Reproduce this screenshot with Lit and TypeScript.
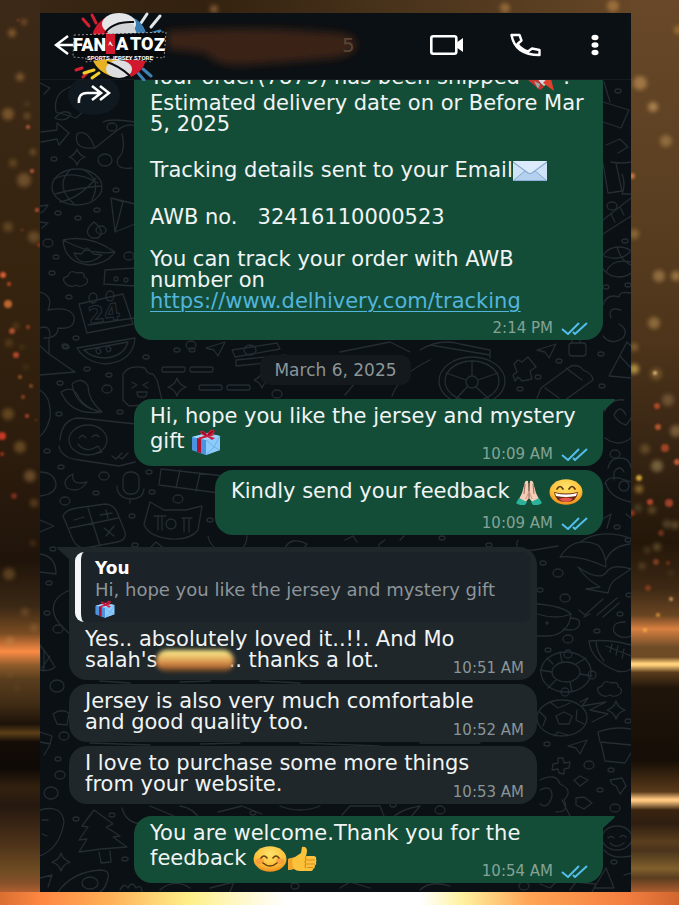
import { LitElement, html, svg, css } from "lit";
import { customElement, property } from "lit/decorators.js";

/* ---------- emoji drawings ---------- */

const gift = svg`
  <polygon points="1,8 16,4 29,7 29,21 15,26 1,21" fill="#5aa9ee"/>
  <polygon points="1,8 15,11 15,26 1,21" fill="#4b93e0"/>
  <polygon points="15,11 29,7 29,21 15,26" fill="#8ccbfa"/>
  <polygon points="1,8 16,4 29,7 15,11" fill="#a7d8fb"/>
  <path d="M15 11l8 7 6-11M15 26l8-8 6 3" fill="none" stroke="#6db1ea" stroke-width="1"/>
  <polygon points="6,9 10,10 10,24 6,23" fill="#b3122d"/>
  <path d="M7 9L20 5l4 1-14 4z" fill="#c4183a"/>
  <path d="M14 7C8 5 8 1 12 2c3 1 4 3 4 4 1-4 4-6 7-5 2 1 0 5-5 6l6 2-3 2-6-4-6 3-2-1z" fill="#d01c3f"/>
  <path d="M11 3l4 3M22 2l-5 4" stroke="#7d0c20" stroke-width="1.2"/>`;

const faceShades = svg`
  <radialGradient id="face" cx="50%" cy="30%" r="70%">
    <stop offset="0" stop-color="#ffe36b"/><stop offset=".65" stop-color="#fcc13a"/><stop offset="1" stop-color="#ee8d1c"/>
  </radialGradient>`;

const emoji: Record<string, { w: number; h: number; label: string; art: unknown }> = {
  gift: { w: 30, h: 26, label: "🎁", art: gift },
  envelope: {
    w: 34, h: 20, label: "✉️",
    art: svg`
      <rect width="34" height="20" rx="1" fill="#cfe3f8"/>
      <path d="M0 20L13 9h8l13 11z" fill="#b4d0ef"/>
      <path d="M1 19L13 9M33 19L21 9" stroke="#86abd2" stroke-width="1"/>
      <path d="M0 0h34L19 12q-2 1-4 0z" fill="#dcebfb"/>
      <path d="M0 1l15 11q2 1 4 0L34 1" fill="none" stroke="#86abd2" stroke-width="1.2"/>
      <path d="M0 19.5h34" stroke="#8db0d6"/>`,
  },
  rocket: {
    w: 30, h: 26, label: "🚀",
    art: svg`
      <path d="M7 12Q15 2 29 1q-1 13-12 20z" fill="#d8dde2"/>
      <path d="M1 15l8-4 5 8 3 3-4 3z" fill="#c9352c"/>
      <path d="M16 18l7-8 4 16z" fill="#e0412f"/>
      <path d="M7 16l6 3-2 5z" fill="#9ea6ac"/>
      <circle cx="20" cy="8" r="3" fill="#4b93c8"/>`,
  },
  pray: {
    w: 26, h: 25, label: "🙏🏻",
    art: svg`
      <path d="M12 1q-2-1-3 1L6 13l-3 6 6 4 4-5zM14 1q2-1 3 1l3 11 3 6-6 4-4-5z" fill="#f3cdb8"/>
      <path d="M13 3v15M9 4L8 14M17 4l1 10" stroke="#a8735f" stroke-width="1.1" fill="none"/>
      <path d="M13 11l-3 8M13 11l3 8" stroke="#d09b85" fill="none"/>
      <path d="M3 18l8 4-2 3q-5 1-9-2zM23 18l-8 4 2 3q5 1 9-2z" fill="#29b39b"/>`,
  },
  grin: {
    w: 34, h: 26, label: "😄",
    art: svg`${faceShades}
      <ellipse cx="17" cy="13" rx="16.5" ry="12.7" fill="url(#face)"/>
      <path d="M8 10q3-5 6 0M20 10q3-5 6 0" fill="none" stroke="#5c3710" stroke-width="1.7" stroke-linecap="round"/>
      <path d="M5 13q12 3 24 0-1 10-12 10T5 13z" fill="#6b2a12"/>
      <path d="M6 14q11 3 22 0l-1 3q-10 2-20 0z" fill="#fff"/>
      <path d="M10 20q7-3 14 0-3 3-7 3t-7-3z" fill="#e8554e"/>`,
  },
  smile: {
    w: 34, h: 26, label: "😊",
    art: svg`${faceShades}
      <ellipse cx="17" cy="13" rx="16.5" ry="12.7" fill="url(#face)"/>
      <ellipse cx="7" cy="15" rx="4" ry="3" fill="#f58a3c" opacity=".6"/>
      <ellipse cx="27" cy="15" rx="4" ry="3" fill="#f58a3c" opacity=".6"/>
      <path d="M8 12q3-4 6 0M20 12q3-4 6 0M10 17q7 6 14 0" fill="none" stroke="#6b3f10" stroke-width="1.6" stroke-linecap="round"/>`,
  },
  thumb: {
    w: 30, h: 26, label: "👍",
    art: svg`
      <path d="M1 13l7-2 6-4 1-6q4-1 5 3 0 3-1 6h8q3 1 2 3 1 2 0 3 1 2-1 3.500 0 3-2 3.500 0 2-3 2H13q-4 0-6-2l-6 1z" fill="#fcc23c"/>
      <path d="M20 14h8M20 18h8M20 21.500h6M19 10q-1 3 0 4-2 2 0 4-2 2 0 4" fill="none" stroke="#d98a1a" stroke-width="1.1"/>
      <path d="M1 24V13l5-1q-2 5 1 11z" fill="#f0a52a"/>`,
  },
};

const pic = (name: string, scale = 1) => {
  const e = emoji[name];
  return html`<svg class="emoji" role="img" aria-label=${e.label}
    width=${Math.round(e.w * scale)} height=${Math.round(e.h * scale)}
    viewBox="0 0 ${e.w} ${e.h}">${e.art}</svg>`;
};

/* ---------- wallpaper ---------- */

const star = (x: number, y: number, r = 9) => svg`
  <path d="M${x} ${y - r}q2 ${r - 2} ${r} ${r}q-${r - 2} 2-${r} ${r}q-2-${r - 2}-${r}-${r}q${r - 2}-2 ${r}-${r}z"/>`;
const plane = (x: number, y: number) => svg`<path d="M${x} ${y}l19-6-7 14-4-6z"/>`;
const cloud = (x: number, y: number) => svg`
  <path d="M${x} ${y}q-6-6 2-8 2-7 9-3 8-2 7 4 6 2 2 7-6 4-10 1-6 3-10-1z"/>`;

const dots: [number, number, number][] = [
  [112, 127, 5], [54, 159, 3], [105, 160, 7], [147, 174, 3], [116, 190, 3], [97, 210, 3], [58, 213, 3], [78, 218, 3],
  [101, 230, 5], [48, 243, 5], [56, 257, 3], [129, 256, 5], [52, 273, 3], [69, 297, 3], [76, 338, 3], [66, 347, 3],
  [87, 369, 3], [109, 375, 3], [60, 383, 3], [107, 389, 5], [59, 414, 3], [120, 412, 3], [47, 451, 3], [61, 467, 3],
  [104, 476, 5], [149, 472, 3], [96, 493, 3], [65, 501, 5], [152, 492, 3], [178, 499, 5], [132, 516, 3], [210, 520, 3],
  [53, 549, 3], [135, 545, 3], [49, 583, 3], [47, 613, 3], [58, 629, 5], [57, 686, 7], [64, 736, 5], [58, 759, 3],
  [60, 775, 5], [51, 793, 7], [76, 819, 3], [112, 815, 3], [125, 859, 3], [152, 876, 4], [191, 345, 5], [146, 357, 3],
  [177, 350, 3], [192, 350, 3], [65, 346, 3], [277, 394, 5], [559, 361, 3], [538, 377, 3], [601, 354, 3], [520, 389, 3],
  [602, 386, 3], [612, 206, 5], [625, 241, 3], [606, 287, 3], [628, 285, 3], [618, 91, 3], [615, 454, 5], [617, 527, 3],
  [628, 540, 3], [543, 563, 3], [558, 573, 5], [540, 590, 3], [565, 598, 5], [629, 595, 3], [620, 614, 3], [597, 631, 3],
  [568, 639, 5], [548, 650, 3], [547, 744, 3], [589, 765, 5], [611, 770, 3], [600, 790, 3], [615, 808, 5], [614, 862, 3],
  [440, 810, 5], [393, 805, 3], [524, 886, 5], [489, 545, 3], [442, 538, 3], [628, 721, 3], [253, 813, 3], [295, 886, 4],
];

const wallpaper = svg`
  <g fill="none" stroke="#242d32" stroke-width="1.300" stroke-linejoin="round" stroke-linecap="round">
    ${dots.map(([x, y, r]) => svg`<ellipse cx=${x} cy=${y} rx=${r} ry=${Math.max(2, r - 1)}/>`)}
    <path d="M56 112q-3-18 12-24 14-10 30-6l10 8-32 28zM55 118q8-10 16-4-4 8-14 5z"/>
    <path d="M40 83l10 5-6 6M41 132l16-2v-7l12 10-10 12-2-6-16 3"/>
    <path d="M77 134q-4 16 18 14l20-16q12-10 20-6M77 134q10-6 18 14M103 122q8-4 32 0"/>
    <path d="M118 158q8-6 4-24M118 158q-4 12 14 10"/>
    ${star(77, 157, 8)}
    <ellipse cx="77" cy="187" rx="25" ry="18"/>
    <path d="M54 179q20-10 44 4M55 194q22-6 46-8M70 170q-16 16 4 34M84 170q18 10 8 30M60 202q20-4 36-24"/>
    <path d="M111 198l24 6v20l-20 8zM111 198l12 4-8 30"/>
    <path d="M40 206l8-1-4 6-4 2M40 222l8 1-6 5"/>
    <path d="M63 240q26-6 52 12-8 12-26 13-24-2-26-25zM63 240q30 16 52 12M92 238q-10-6 2-16 12 10 4 16zM74 253q4 10 12 9 8 0 16-7l-8-1-7-6-6 6z"/>
    ${cloud(66, 284)}
    <path d="M105 270l30-2v18l-31-2z"/><circle cx="116" cy="279" r="2"/><circle cx="126" cy="280" r="2"/>
    <path d="M79 304l8 29 46-9-10-30zM88 325l46-7"/><ellipse cx="93" cy="298" rx="4" ry="5"/><ellipse cx="110" cy="296" rx="4" ry="5"/>
    <path d="M40 292q14 4 8 18 22-4 26 6 2 14-16 12 0 10-14 10M40 328q10-4 10 8M40 346l9 8 26 18-35 3M49 338v16"/>
    <path d="M77 348l58-10q-2 24-30 26-20-2-28-16zM84 350l44-8q-4 14-22 16-14 0-22-8z"/>
    <path d="M98 354q-4-4 0-6 6 4 0 6zM108 352q-4-4 0-6 6 4 0 6z"/>
    <path d="M61 392q12-8 18 6 6 10 22 14-30 4-40-20zM72 384q10-8 16 2 0 14 14 26-26-4-30-28z"/>
    <path d="M123 400v-26q6-10 22-6 2 6 8 6l4 6 6 24-34 2zM132 382l5 3-5 3M148 382l-5 3 5 3M137 392h10q0 6-5 5-5 1-5-5"/>
    <rect x="162" y="367" width="23" height="5" rx="2"/><rect x="190" y="367" width="23" height="5" rx="2"/>
    <rect x="199" y="385" width="23" height="5" rx="2"/><rect x="227" y="385" width="23" height="5" rx="2"/>
    <path d="M232 350l45-7 3 6-45 8zM236 360l50-5v6l-50 5z"/><ellipse cx="250" cy="350" rx="6" ry="5"/>
    ${plane(206, 348)} ${star(177, 387)} ${star(262, 380, 8)}
    <path d="M340 352l50-10 20 10M345 395l10-12q10-8 30 0"/>
    <path d="M60 440q2-22 20-22l56 6M59 446q2 12 20 14l40 6 16-4"/>
    <ellipse cx="88" cy="440" rx="19" ry="15"/><path d="M79 438q4-5 7 0M92 437q4-4 7 0M78 444q8 10 20 2l4 6-5 1M112 456l4 3 6-6M119 457l3 2 6-6"/>
    <path d="M40 390q12 8 10 28-4 14-10 18M40 472q14 0 16 12 0 10-16 12"/>
    <path d="M73 474q-12 6-6 14 12 6 20-6-16 4-14-8z"/>
    <rect x="123" y="472" width="16" height="22" rx="7"/><path d="M117 486q0 12 14 13 12 0 13-10M130 499v4"/>
    <path d="M161 469l90 10M159 485l60 8M161 469l-2 16M180 470l-4 18M200 473l-4 18"/>
    <path d="M63 516q2-6 14-8l28-4q8 0 12 8l8 20q2 8-8 10l-32 6q-8 0-12-8zM70 528l48-10M88 508l12 38M74 520l10-3M100 515l12-2M106 510l2 8M104 528l10 8M114 526l-8 10"/>
    <path d="M144 524l6-22 14 8h22l16-4-4 24q-8 10-26 9-24-2-28-15zM154 516h12M158 516v14M162 516v14M182 518h10M184 518v14M189 518v14"/><circle cx="171" cy="524" r="5"/>
    <path d="M208 536q2 12 18 18M247 536q0 8-6 14M285 548q6-12 22-4l-10 12M150 548l6-6 10 8"/>
    <path d="M40 554q16 2 16 20l-16-2M40 520l14 6-14 6M70 590q-20 8-16 24 2 8 16 20"/>
    <path d="M40 645q8 10 15 22-6 5-15 3zM44 650v20M50 656l-8 12M53 714q8-6 16-1l-2 12-10-1zM40 732l12 4-2 8-10-2M50 745l-6 10"/>
    <path d="M40 810q22-6 24 12-4 26-24 34M42 820h6M42 834l5 2"/>
    <path d="M94 810l-12 16 6 1-9 13 8-1-8 13 22-3 26-2-14-10 7-1-14-9 7-3zM99 852l2 11 10-1-1-11"/>
    ${star(61, 862, 9)}
    <path d="M58 892q14-20 42-22 10 0 8 8-2 10-8 14"/><ellipse cx="90" cy="883" rx="8" ry="6"/>
    <path d="M40 878l12-3-4 12M120 890q4-8 8-2 4-8 8 0 6-4 6 4M160 890q14-12 30-2M210 888l24-6-4 10"/>
    <path d="M122 808q4 16 22 16M150 806l24 10-10 6M180 806q14 2 20 14M218 812l24-6 20 8M280 806q20 8 40 0M342 815l8-9h30l4 10M420 806l-10 12-20 4q6-12 30-16"/>
    <path d="M430 360q-30 14-38 36M420 350q20-12 40-6l30 6v8M430 345l60 10"/>
    <ellipse cx="472" cy="381" rx="33" ry="24"/><ellipse cx="472" cy="381" rx="27" ry="20"/><circle cx="472" cy="382" r="6"/>
    <path d="M472 376v-15M478 380l20-7M476 387l14 13M467 387l-12 13M466 380l-20-7"/>
    ${plane(537, 350)}
    <rect x="569" y="343" width="17" height="13" rx="3"/><path d="M572 343v-4q4-5 8 0v4M514 364l4-4 4 2 6-5 8 10-6 4 2 8-10 2-4-4-3 4-2-6 4-3z"/>
    <path d="M537 398l4-10 30-22q8-2 12 4 10 4 10 10l-28 20M545 388l14 10M566 368l16 12"/>
    <path d="M604 82l6 20M603 102l26 8-8 18-18-6M606 145l14-6 8 8-10 6M603 163l5 30 14-2-6-28M611 162q10 2 20 0M622 174q4 10 0 20h9M603 220l28-22M603 234l28-18M611 214l4 8M620 207l4 8"/>
    <ellipse cx="619" cy="262" rx="18" ry="15"/><path d="M604 256q16 6 26-4M606 272q6-14 25-10M617 247q4 14 14 18"/>
    <path d="M603 305q4-12 16-8 0-6 12-4M611 318q-4-12 10-8M603 336q8 10 20 2 6-8-4-14M609 376l18-34 4 4M609 376l22 2M620 356l11 12"/>
    <path d="M604 412q6-14 20-12M605 438q14 10 26 0M626 415q-6-12-12 0 4 8 12 10 8-8 5-14M608 468q2-10 12-10t11 10M614 480v-8q6-8 10 0M605 484q2-8 14-6l12 4M606 484q4 14 25 18"/>
    <circle cx="624" cy="486" r="5"/><path d="M601 520l10-6-4 14M626 514l5 4"/>
    <path d="M560 557q14-22 38-12 8 8 8 22-26-12-46-10zM580 542q20-14 50-4M606 560q6-14 24-16M578 567q8 12 22 20l-14 2 22 4q2-10 8-14l15-10q-20-6-25 4-8 8-28-6z"/>
    <path d="M518 540q-6 12 16 10l24-4M400 540l4-4M385 540q-10 6-4 8M345 540l8-4 4 6"/>
    <path d="M537 604q26 2 34 10-2 20-22 22h-12M537 614q20 6 34 0M570 618q12 0 9 8-4 6-16 3"/><circle cx="547" cy="623" r="1"/>
    <path d="M579 610l6 5 18-16M584 617l6-3M597 615l20-17M603 617l16-14"/>
    <path d="M625 622q-14 0-11 10 6 8 17 4"/>
    <path d="M589 641q20-2 42 4M589 641q2 20 28 30 8 2 14-2M596 641q0 10 8 20M606 646l25 10M612 644l-2 8M618 646l-2 9M624 649l-2 9"/>
    <ellipse cx="566" cy="672" rx="25" ry="20"/><ellipse cx="566" cy="672" rx="14" ry="10"/>
    <path d="M562 662l-2-10M576 664l10-6M580 674l12 2M570 682l2 10M556 680l-8 8M552 672l-12-2M553 664l-6-6"/>
    <circle cx="568" cy="654" r="4"/><circle cx="592" cy="675" r="4"/><circle cx="565" cy="692" r="4"/>
    ${cloud(600, 694)}
    <ellipse cx="562" cy="718" rx="25" ry="18"/><path d="M556 716l8-4 8 4-3 8h-10zM550 702l8 6 12-5M577 710l-1 10 8 4M540 712l6 6-3 8M554 736l4-4 10 3M580 702l8-4-6 8 24-4-16 8 18 4-16 8"/>
    ${star(616, 710, 9)} ${plane(568, 746)}
    <path d="M598 732q16-6 33-3M598 732l2 10 31 3M601 743l4 18 20 2 6-10"/>
    <path d="M558 758h5l1 5 6-1-1 6-5 1v5l-5-1-1-4-6 1 1-6 5-1zM574 780l6-4 8 4-8 6zM576 798l8-1 8 6-8 6-8-4zM610 780l12-2 4 8-6 8-4-8-4-2z"/>
    <path d="M540 780q16-8 20 4 14 6 4 16 6 12-8 12M540 790q12-6 12 6-4 14-12 8M562 800l8 16"/>
    <ellipse cx="617" cy="838" rx="15" ry="12"/><path d="M608 838q3-3 6 0M620 837q3-3 6 0M610 843q6 6 14 0M604 850q8 10 27 6M606 868l8 20h-20zM624 875l7-2"/>
    <path d="M540 884l10 4 8-8M570 890l6-8 20 2-4 8M340 888l10-6 20 6M420 890q10-10 30-4"/>
    <path d="M100 681l30 2M180 682l30-1M260 681l40 2M90 743l60 2M200 744l40-1M300 743l80 3M420 743h60"/>
  </g>
  <text class="doodle-text" x="88" y="321" transform="rotate(-8 106 312)">24</text>`;

/* ---------- surrounding sparkles ---------- */

const glows: [number, number, number, string][] = [
  [214, 9, 6, "#a87848"], [505, 8, 7, "#b98548"], [613, 6, 8, "#c08a4a"], [12, 33, 6, "#b07a3c"], [24, 22, 5, "#a06c38"],
  [20, 77, 6, "#a87840"], [8, 114, 8, "#a0733c"], [27, 116, 5, "#99703c"], [27, 104, 4, "#8d6534"], [33, 152, 5, "#98703e"],
  [13, 163, 6, "#80592c"], [24, 180, 9, "#92693a"], [8, 227, 7, "#7a582e"], [34, 237, 8, "#856238"], [16, 326, 5, "#6e5024"],
  [22, 347, 4, "#71562c"], [9, 343, 6, "#6a4a22"], [26, 367, 4, "#71562c"], [8, 414, 8, "#83602e"], [20, 447, 8, "#87642e"],
  [30, 476, 8, "#90693a"], [34, 503, 6, "#7a562a"], [33, 543, 5, "#614020"], [9, 574, 8, "#7d5a2c"], [25, 612, 6, "#7d5632"],
  [34, 628, 6, "#8d6634"], [10, 641, 6, "#c08446"], [10, 675, 4, "#8c6234"], [17, 688, 4, "#7c5428"],
  [640, 83, 9, "#c89858"], [653, 107, 7, "#d8a868"], [678, 30, 6, "#bd8a3c"], [666, 141, 8, "#b08850"], [634, 234, 7, "#a88040"],
  [659, 276, 8, "#b89058"], [676, 276, 7, "#c49a58"], [654, 323, 8, "#b48c50"], [634, 347, 6, "#a07a40"], [634, 369, 7, "#f5cc60"],
  [656, 374, 8, "#8c6a34"], [668, 400, 8, "#8c6c44"], [645, 449, 7, "#7c6234"], [657, 466, 8, "#a08a58"], [676, 431, 8, "#a08050"],
  [639, 489, 6, "#c09440"], [638, 508, 6, "#5c5234"], [652, 510, 6, "#7a6034"], [667, 524, 6, "#726040"], [675, 525, 6, "#80663e"],
  [657, 547, 6, "#7a6438"], [642, 566, 5, "#7a6238"], [647, 550, 5, "#6a5530"], [671, 573, 4, "#70542e"],
];
const sparks: [number, number, number, string][] = [
  [18, 20, 1, "#d8543a"], [28, 127, 2, "#d86848"], [32, 171, 2, "#e06a48"], [37, 210, 2, "#d86040"], [39, 245, 2, "#b03820"],
  [3, 275, 3, "#ff6a3c"], [9, 284, 2, "#e0512c"], [8, 304, 4, "#e07838"], [12, 331, 3, "#c85a34"], [28, 327, 2, "#b04828"],
  [16, 355, 3, "#d05034"], [20, 377, 2, "#a8622e"], [23, 397, 2, "#a84c2c"], [31, 386, 2, "#945a34"], [27, 416, 2, "#d84c34"],
  [2, 436, 4, "#e8402c"], [2, 454, 2, "#c03820"], [14, 496, 3, "#8a3020"], [36, 420, 1, "#b04028"], [22, 230, 1, "#b84838"],
  [655, 373, 2, "#ffd890"], [657, 406, 3, "#c8502c"], [658, 427, 3, "#d06038"], [665, 448, 4, "#b84c2c"], [677, 462, 3, "#e06840"],
  [639, 478, 3, "#f0c040"], [650, 502, 3, "#d05030"], [669, 503, 4, "#b84830"], [632, 513, 3, "#a03824"], [661, 533, 3, "#7c3820"],
  [656, 562, 3, "#8c4428"], [668, 563, 2, "#843820"], [648, 588, 3, "#8a4020"], [671, 599, 2, "#e8b470"], [658, 615, 2, "#f0a840"],
  [645, 630, 2, "#ffb850"], [632, 176, 3, "#d88040"],
];

/* ---------- double tick ---------- */

const ticks = html`<svg class="ticks" role="img" aria-label="Read" width="27" height="13" viewBox="0 0 27 13">
  <path d="M1 7l6 5L18 1M12 10l2 2L26 1" fill="none" stroke="#53bdeb" stroke-width="2"/></svg>`;

@customElement("chat-bubble")
class ChatBubble extends LitElement {
  @property() time = "";
  @property({ type: Boolean, reflect: true }) sent = false;
  @property({ type: Boolean, reflect: true }) tail = false;
  @property({ type: Boolean, reflect: true }) stacked = false;
  @property({ type: Boolean, reflect: true }) narrow = false;

  static styles = css`
    :host {
      display: block;
      position: relative;
      margin-right: 94px;
      margin-left: 29px;
      border-radius: 18px;
      background: #1f272a;
      color: #f1f4f5;
    }
    :host([sent]) {
      margin-left: 94px;
      margin-right: 28px;
      background: #144d37;
    }
    :host([narrow]) {
      margin-left: 175px;
    }
    :host([tail]) {
      margin-top: 8px;
    }
    :host([tail]:not([sent])) {
      border-top-left-radius: 0;
    }
    :host([tail][sent]) {
      border-top-right-radius: 0;
    }
    :host([tail])::before {
      content: "";
      position: absolute;
      top: 0;
      left: -12px;
      width: 13px;
      height: 13px;
      background: inherit;
      clip-path: polygon(0 0, 100% 0, 100% 100%, 8% 18%);
    }
    :host([tail][sent])::before {
      left: auto;
      right: -12px;
      clip-path: polygon(0 0, 100% 0, 92% 18%, 0 100%);
    }
    .body {
      display: grid;
    }
    .text {
      grid-area: 1 / 1;
      padding: 7px 0 9px 16px;
    }
    .meta {
      grid-area: 1 / 1;
      align-self: end;
      justify-self: end;
      display: flex;
      align-items: center;
      gap: 8px;
      padding: 0 13px 2px;
      font-size: 15px;
      line-height: 20px;
      color: #8a9499;
    }
    :host([sent]) .meta {
      color: #84a296;
      padding-right: 15px;
    }
    :host([stacked]) .text {
      padding-bottom: 0;
    }
    :host([stacked]) .meta {
      grid-area: 2 / 1;
      padding-top: 6px;
    }
  `;

  render() {
    return html`
      <slot name="quote"></slot>
      <div class="body">
        <div class="text"><slot></slot></div>
        <div class="meta"><time>${this.time}</time>${this.sent ? ticks : ""}</div>
      </div>`;
  }
}

@customElement("app-root")
class AppRoot extends LitElement {
  static styles = css`
    :host {
      display: block;
      font-family: "DejaVu Sans", sans-serif;
      font-size: 21px;
      line-height: 21px;
    }
    * {
      box-sizing: border-box;
    }
    .page {
      position: relative;
      height: 100vh;
      padding: 13px 48px 13px 40px;
      background:
        linear-gradient(90deg, #d96e30, #ff8742 6%, #ffb057 16%, #fff08a 28%, #ffffff 42%, #ffffff 62%, #fff3a0 68%, #ffa455 78%, #f47f40 92%, #d0662f) bottom / 100% 13px no-repeat,
        linear-gradient(180deg, #3c2917, #36240f 30%, #2c1c0d 50%, #20140a 62%, #3a2815 67%, #7a4c22 70%, #fc8c46 72%, #8f5c2a 73.5%, #5a3e1e 75%, #3e2a14 78%, #1c1209 80%, #5c3f18 81%, #120b06 82%, #100a06 85%, #33210f 87%, #25180f 89%, #4a3018 93%, #6c4b22 96%, #85502a 97.5%, #e87338) left / 40px 100% no-repeat,
        linear-gradient(180deg, #684828, #5c4022 20%, #4d341a 38%, #362413 50%, #241709 60%, #3c2814 65%, #6a4522 68%, #d98040 69.5%, #6e4c28 71.5%, #6e4a24 72.6%, #ffd07a 73.3%, #ffd07a 73.5%, #5a3c1c 74.3%, #20150b 76%, #150e06 84%, #5a3a1a 87.5%, #ffc880 88.3%, #ffc880 88.5%, #3a2410 89.5%, #2e1e10 91%, #5a3e1e 93%, #4a341c 94%, #80602c 96%, #5a3d20 97%, #f47a3c) right / 48px 100% no-repeat,
        linear-gradient(90deg, #3a2715, #33220f 30%, #4a341c 60%, #6b4a28);
    }
    .sparkles {
      position: absolute;
      inset: 0;
      width: 100%;
      height: 100%;
    }
    .phone {
      position: relative;
      display: flex;
      flex-direction: column;
      height: 100%;
      background: #0b1014;
    }
    header {
      position: relative;
      z-index: 1;
      display: flex;
      align-items: center;
      flex: none;
      height: 67px;
      padding: 0 28px 2px 14px;
      background: #0b1014;
      border-bottom: 1px solid #161c20;
      color: #ffffff;
    }
    button {
      display: flex;
      margin: 0;
      padding: 0;
      border: 0;
      background: none;
      color: inherit;
      cursor: pointer;
    }
    .logo {
      flex: none;
      margin: -2px 0 -4px -2px;
      z-index: 1;
    }
    .logo text {
      font-family: Roboto, sans-serif;
      font-weight: 900;
      font-size: 18px;
      fill: #ffffff;
    }
    .logo .tagline {
      font-size: 6px;
      font-weight: 700;
    }
    .contact {
      flex: 1;
      min-width: 0;
      display: flex;
      margin-left: -8px;
    }
    .contact svg {
      flex: none;
    }
    .contact text {
      font-size: 20px;
      fill: #5a4535;
    }
    .actions {
      display: flex;
      align-items: center;
    }
    .actions button + button {
      margin-left: 46px;
    }
    .chat {
      position: relative;
      flex: 1;
      min-height: 0;
      overflow: hidden;
    }
    .wallpaper {
      position: absolute;
      inset: 0;
      width: 100%;
      height: 100%;
    }
    .doodle-text {
      font-size: 23px;
      font-weight: 700;
      fill: none;
      stroke: #242d32;
    }
    .log {
      position: relative;
      height: 100%;
      display: flex;
      flex-direction: column;
      justify-content: flex-end;
      gap: 4px;
      padding-bottom: 9px;
    }
    .forward {
      position: absolute;
      top: -5px;
      left: 28px;
      align-items: center;
      justify-content: center;
      width: 52px;
      height: 40px;
      border-radius: 50%;
      background: #0f191f;
      color: #ffffff;
    }
    .day {
      align-self: center;
      margin: 11px 0 2px;
      padding: 0 14px;
      border-radius: 10px;
      background: #13191d;
      color: #8c9598;
      font-size: 17px;
      line-height: 30px;
    }
    a {
      color: #53b4dc;
      text-decoration: underline;
      text-decoration-thickness: 1px;
      text-underline-offset: 3px;
    }
    .emoji {
      vertical-align: middle;
      margin: 2px 0;
    }
    .pad {
      display: inline-block;
      width: 2px;
      height: 30px;
      vertical-align: middle;
    }
    .quote {
      display: block;
      margin: 5px 6px 0;
      padding: 6px 14px 4px;
      border-left: 6px solid #f4f6f7;
      border-radius: 9px;
      background: #1b2228;
      color: #8d9599;
      font-size: 18px;
      line-height: 21px;
    }
    .quote strong {
      display: block;
      color: #ffffff;
      font-size: 17px;
    }
    .quote .emoji {
      display: block;
      margin: 0;
    }
    .smudge {
      display: inline-block;
      width: 78px;
      height: 22px;
      margin: -2px -5px -2px -2px;
      vertical-align: middle;
      border-radius: 12px;
      background: linear-gradient(180deg, #fff08c 5%, #e0a55a 45%, #c87a3c 70%, #4a3420);
      filter: blur(2px);
    }
  `;

  render() {
    return html`
      <div class="page">
        <svg class="sparkles" viewBox="0 0 679 905" preserveAspectRatio="none" aria-hidden="true">
          <filter id="soft" x="-60%" y="-60%" width="220%" height="220%"><feGaussianBlur stdDeviation="2"/></filter>
          <filter id="fine" x="-60%" y="-60%" width="220%" height="220%"><feGaussianBlur stdDeviation="0.8"/></filter>
          ${glows.map(([x, y, r, c]) => svg`<circle cx=${x} cy=${y} r=${r - 2} fill=${c} opacity=".6" filter="url(#soft)"/>`)}
          ${sparks.map(([x, y, r, c]) => svg`<circle cx=${x} cy=${y} r=${r} fill=${c} opacity=".8" filter="url(#fine)"/>`)}
        </svg>
        <main class="phone">
          <header>
            <button aria-label="Back">
              <svg width="20" height="22" viewBox="0 0 20 22"><path d="M14 2L2 11l12 9M2 11h18" fill="none" stroke="currentColor" stroke-width="2.500"/></svg>
            </button>
            <svg class="logo" width="96" height="70" viewBox="0 0 96 70" role="img" aria-label="Fan A to Z Sports Jersey Store">
              <g stroke-width="3" stroke-linecap="round">
                <path d="M24 12l-4-8M17 15l-6-7M10 57l-6 2M17 60l-6 6" stroke="#d21f33"/>
                <path d="M12 62l10-3M20 67l7-5" stroke="#f2cf2a" />
                <path d="M69 12l6-9M79 16l9-11" stroke="#dfe6ec"/>
                <path d="M78 23l10-3M66 62l6 7M71 58l8 7" stroke="#3d82b5"/>
              </g>
              <ellipse cx="47" cy="35" rx="29" ry="33" fill="#0a0c10"/>
              <path d="M19 29Q22 9 42 3l4 22z" fill="#d2182c"/>
              <path d="M45 27Q70 24 75 27 73 10 57 5z" fill="#3b7db0"/>
              <ellipse cx="47" cy="13" rx="17" ry="11" fill="#e4e6e8"/>
              <path d="M33 27q8-18 28-14l4 10q-12 0-20 4z" fill="#cfd3d6"/>
              <path d="M33 22q8-12 29-11" fill="none" stroke="#0a0c10" stroke-width="2"/>
              <path d="M19 44h30l-8 22Q23 60 19 44z" fill="#e7b222"/>
              <path d="M50 44h25q-2 16-16 22z" fill="#d2182c"/>
              <ellipse cx="47" cy="58" rx="13" ry="9" fill="#dcdee0"/>
              <path d="M35 51q12 4 22 13" fill="none" stroke="#0a0c10" stroke-width="2"/>
              <path d="M2 24l92-3-2 26-12-1v5q-33-6-66 0v-4L1 46z" fill="#07090c" stroke="#e9edf0" stroke-width=".6" stroke-dasharray="2 2"/>
              <path d="M34 23h9v20h-9z" fill="#d2182c"/>
              <path d="M36 35l2-5 3 5h-1l-2-2z" fill="#ffffff"/>
              <text x="1" y="40">FAN</text><text x="44" y="39">A</text><text x="58" y="39">TO</text><text x="82" y="40">Z</text>
              <text class="tagline" x="15" y="49">SPORTS JERSEY STORE</text>
            </svg>
            <div class="contact">
              <svg width="220" height="52" viewBox="0 0 220 52" role="img" aria-label="Contact name hidden">
                <filter id="smear" x="-10%" y="-30%" width="120%" height="160%"><feGaussianBlur stdDeviation="4"/></filter>
                <path d="M6 12q80-6 172 2 20 2 18 14-4 10-30 12l-80 6q-30 2-40-12l-38-4z" fill="#3a2312" filter="url(#smear)"/>
                <text x="182" y="33">5</text>
              </svg>
            </div>
            <div class="actions">
              <button aria-label="Video call">
                <svg width="34" height="22" viewBox="0 0 34 22">
                  <rect x="1.300" y="2.200" width="25" height="17.500" rx="2" fill="none" stroke="currentColor" stroke-width="2.600"/>
                  <path d="M26 9l7-5v14l-7-5z" fill="currentColor"/>
                </svg>
              </button>
              <button aria-label="Voice call">
                <svg width="31" height="24" viewBox="0 0 31 24">
                  <path d="M1.500 2h8l2 5.500-4 3.500q4 5.500 10.500 7.500l4-3 7.500 1.500v5Q5 22 1.500 2z" fill="none" stroke="currentColor" stroke-width="2.400" stroke-linejoin="round"/>
                </svg>
              </button>
              <button aria-label="More options">
                <svg width="16" height="22" viewBox="0 0 16 22" fill="currentColor">
                  <ellipse cx="8" cy="3.500" rx="3.500" ry="2.800"/><ellipse cx="8" cy="11" rx="3.500" ry="2.800"/><ellipse cx="8" cy="18.500" rx="3.500" ry="2.800"/>
                </svg>
              </button>
            </div>
          </header>
          <section class="chat">
            <svg class="wallpaper" viewBox="40 80 591 812" preserveAspectRatio="xMidYMid slice" aria-hidden="true">${wallpaper}</svg>
            <div class="log">
              <chat-bubble sent stacked time="2:14 PM">Your order(7879) has been shipped ${pic("rocket")} .<br>Estimated delivery date on or Before Mar<br>5, 2025<br><br>Tracking details sent to your Email${pic("envelope")}<span class="pad"></span><br><br>AWB no. &nbsp; 32416110000523<br><br>You can track your order with AWB<br>number on<br><a href="https://www.delhivery.com/tracking">https://www.delhivery.com/tracking</a></chat-bubble>
              <div class="day">March 6, 2025</div>
              <chat-bubble sent tail time="10:09 AM">Hi, hope you like the jersey and mystery<br>gift ${pic("gift")}</chat-bubble>
              <chat-bubble sent stacked narrow time="10:09 AM">Kindly send your feedback ${pic("pray")} ${pic("grin")}</chat-bubble>
              <chat-bubble tail time="10:51 AM">
                <blockquote class="quote" slot="quote"><strong>You</strong>Hi, hope you like the jersey and mystery gift${pic("gift", 0.68)}</blockquote>
                Yes.. absolutely loved it..!!. And Mo<br>salah's<span class="smudge"></span>.. thanks a lot.
              </chat-bubble>
              <chat-bubble time="10:52 AM">Jersey is also very much comfortable<br>and good quality too.</chat-bubble>
              <chat-bubble time="10:53 AM">I love to purchase some more things<br>from your website.</chat-bubble>
              <chat-bubble sent tail time="10:54 AM">You are welcome.Thank you for the<br>feedback ${pic("smile")}${pic("thumb")}</chat-bubble>
            </div>
            <button class="forward" aria-label="Forward">
              <svg width="34" height="22" viewBox="0 0 34 22" fill="none" stroke="currentColor" stroke-width="2.600">
                <path d="M2 19q-1-10 8-10h13M15 2l9 7-9 7M23 2l9 7-9 7"/>
              </svg>
            </button>
          </section>
        </main>
      </div>`;
  }
}
